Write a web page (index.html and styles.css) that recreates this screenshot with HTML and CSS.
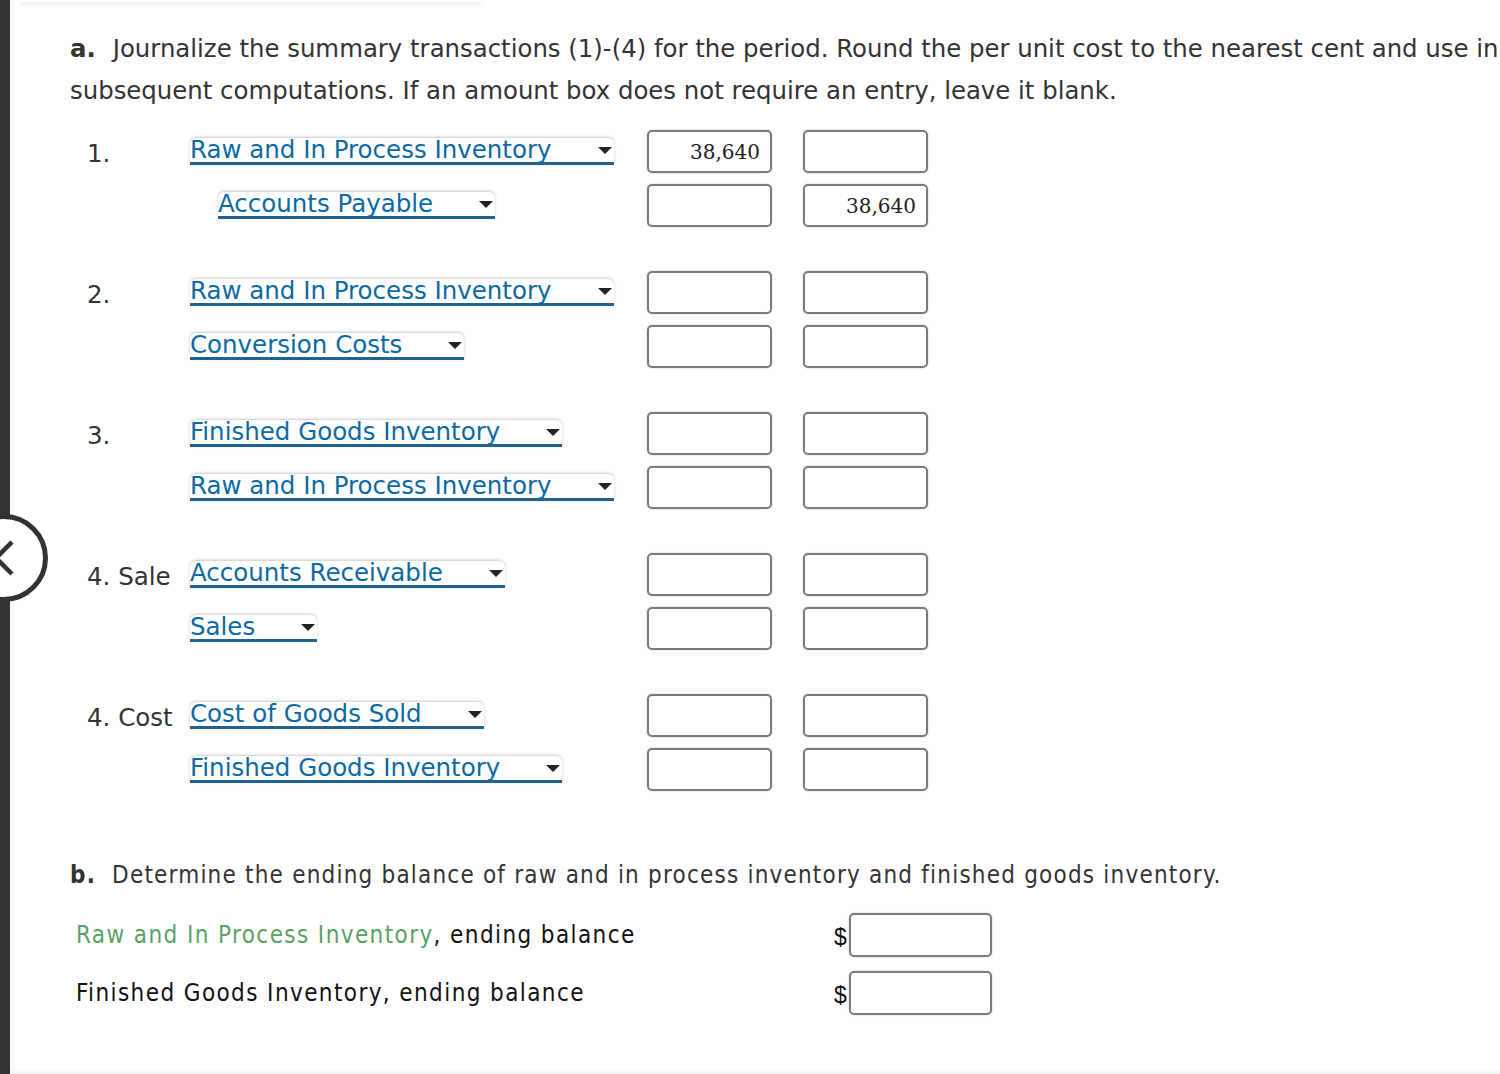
FILE: index.html
```html
<!DOCTYPE html>
<html>
<head>
<meta charset="utf-8">
<link rel="stylesheet" href="styles.css">
</head>
<body>
<div class="page">
  <div class="strip"></div>
  <div class="content">
    <div class="prev-card"></div>
    <p class="instr"><b class="part-label">a.</b>Journalize the summary transactions (1)-(4) for the period. Round the per unit cost to the nearest cent and use in subsequent computations. If an amount box does not require an entry, leave it blank.</p>

    <div class="journal">
      <div class="group">
        <div class="entry">
          <div class="num">1.</div>
          <div class="acct"><span class="select">Raw and In Process Inventory<i class="arrow"></i></span></div>
          <div class="amt">38,640</div>
          <div class="amt"></div>
        </div>
        <div class="entry">
          <div class="num"></div>
          <div class="acct credit"><span class="select">Accounts Payable<i class="arrow"></i></span></div>
          <div class="amt"></div>
          <div class="amt">38,640</div>
        </div>
      </div>
      <div class="group">
        <div class="entry">
          <div class="num">2.</div>
          <div class="acct"><span class="select">Raw and In Process Inventory<i class="arrow"></i></span></div>
          <div class="amt"></div>
          <div class="amt"></div>
        </div>
        <div class="entry">
          <div class="num"></div>
          <div class="acct"><span class="select">Conversion Costs<i class="arrow"></i></span></div>
          <div class="amt"></div>
          <div class="amt"></div>
        </div>
      </div>
      <div class="group">
        <div class="entry">
          <div class="num">3.</div>
          <div class="acct"><span class="select">Finished Goods Inventory<i class="arrow"></i></span></div>
          <div class="amt"></div>
          <div class="amt"></div>
        </div>
        <div class="entry">
          <div class="num"></div>
          <div class="acct"><span class="select">Raw and In Process Inventory<i class="arrow"></i></span></div>
          <div class="amt"></div>
          <div class="amt"></div>
        </div>
      </div>
      <div class="group">
        <div class="entry">
          <div class="num">4. Sale</div>
          <div class="acct"><span class="select">Accounts Receivable<i class="arrow"></i></span></div>
          <div class="amt"></div>
          <div class="amt"></div>
        </div>
        <div class="entry">
          <div class="num"></div>
          <div class="acct"><span class="select">Sales<i class="arrow"></i></span></div>
          <div class="amt"></div>
          <div class="amt"></div>
        </div>
      </div>
      <div class="group">
        <div class="entry">
          <div class="num">4. Cost</div>
          <div class="acct"><span class="select">Cost of Goods Sold<i class="arrow"></i></span></div>
          <div class="amt"></div>
          <div class="amt"></div>
        </div>
        <div class="entry">
          <div class="num"></div>
          <div class="acct"><span class="select">Finished Goods Inventory<i class="arrow"></i></span></div>
          <div class="amt"></div>
          <div class="amt"></div>
        </div>
      </div>
    </div>

    <p class="part-b"><b class="part-label">b.</b>Determine the ending balance of raw and in process inventory and finished goods inventory.</p>
    <div class="balances">
      <div class="bal-row">
        <div class="bal-label"><span class="green">Raw and In Process Inventory</span>, ending balance</div>
        <div class="dollar">$</div>
        <div class="bal-box"></div>
      </div>
      <div class="bal-row">
        <div class="bal-label">Finished Goods Inventory, ending balance</div>
        <div class="dollar">$</div>
        <div class="bal-box"></div>
      </div>
    </div>
  </div>
</div>
<div class="nav-circle"><svg width="20" height="40" viewBox="0 0 20 40"><path d="M14 4 L-2 20 L14 36" fill="none" stroke="#333" stroke-width="4.5"/></svg></div>
<div class="bottom-band"></div>
</body>
</html>
```

FILE: styles.css
```css
html, body {
  margin: 0;
  padding: 0;
  background: #fff;
}
body {
  position: relative;
  width: 1500px;
  height: 1074px;
  overflow: hidden;
  font-family: "DejaVu Sans", Verdana, sans-serif;
  color: #333;
}
.page {
  display: flex;
  height: 1074px;
}
.strip {
  width: 10px;
  flex: none;
  background: #333;
}
.content {
  flex: 1;
  padding-left: 60px;
}
.prev-card {
  width: 460px;
  height: 2px;
  margin-left: -50px;
  background: #fff;
  box-shadow: 0 1px 4px rgba(0, 0, 0, 0.18);
}
.instr {
  margin: 26px 0 0 0;
  font-size: 24.4px;
  line-height: 42px;
  width: 1440px;
}
.part-label {
  display: inline-block;
  font-weight: bold;
  margin-right: 17px;
}
.journal {
  margin-top: 18px;
  margin-left: 17px;
  display: flex;
  flex-direction: column;
  gap: 44px;
}
.group {
  display: flex;
  flex-direction: column;
  gap: 11px;
}
.entry {
  display: flex;
  align-items: center;
  height: 43px;
}
.num {
  width: 103px;
  flex: none;
  font-size: 24.5px;
  color: #333;
  padding-top: 4px;
  white-space: nowrap;
}
.acct {
  width: 457px;
  flex: none;
}
.acct.credit {
  padding-left: 28px;
  width: 429px;
}
.select {
  display: inline-flex;
  align-items: center;
  gap: 46px;
  padding-right: 2px;
  height: 24px;
  font-size: 24.5px;
  line-height: 24px;
  color: #0c69a3;
  background: #fff;
  border-radius: 6px 6px 0 0;
  border-bottom: 3px solid #23618e;
  box-shadow: 0 -1px 3px rgba(0, 0, 0, 0.22);
  white-space: nowrap;
}
.arrow {
  display: inline-block;
  width: 0;
  height: 0;
  border-left: 7px solid transparent;
  border-right: 7px solid transparent;
  border-top: 7px solid #222;
  margin-top: 1px;
}
.amt {
  box-sizing: border-box;
  width: 125px;
  height: 43px;
  flex: none;
  border: 2px solid #7a7a7a;
  border-radius: 5px;
  box-shadow: 0 0 2px rgba(0, 0, 0, 0.25);
  font-family: "DejaVu Serif", "Liberation Serif", serif;
  font-size: 20px;
  color: #222;
  text-align: right;
  padding: 1px 10px 0;
  line-height: 39px;
}
.amt + .amt {
  margin-left: 31px;
}
.part-b {
  margin: 69px 0 0 0;
  font-family: "DejaVu Sans Condensed", "DejaVu Sans", sans-serif;
  font-size: 24px;
  letter-spacing: 1.2px;
  line-height: 30px;
  color: #333;
}
.part-b .part-label {
  margin-right: 16px;
}
.balances {
  margin-top: 23px;
  display: flex;
  flex-direction: column;
  gap: 14px;
}
.bal-row {
  display: flex;
  align-items: center;
  height: 44px;
  padding-left: 6px;
}
.bal-label {
  width: 758px;
  flex: none;
  font-family: "DejaVu Sans Condensed", "DejaVu Sans", sans-serif;
  font-size: 24px;
  letter-spacing: 1.4px;
  color: #111;
  white-space: nowrap;
}
.green {
  color: #5aa263;
}
.dollar {
  width: 15px;
  flex: none;
  font-family: "Liberation Sans", sans-serif;
  font-size: 23px;
  color: #111;
  padding-top: 4px;
}
.bal-box {
  box-sizing: border-box;
  width: 143px;
  height: 44px;
  border: 2px solid #7a7a7a;
  border-radius: 5px;
  box-shadow: 0 0 2px rgba(0, 0, 0, 0.25);
}
.nav-circle {
  position: absolute;
  left: -40px;
  top: 514px;
  width: 78px;
  height: 78px;
  border: 5px solid #333;
  border-radius: 50%;
  background: #fff;
  display: flex;
  align-items: center;
  justify-content: flex-end;
}
.nav-circle svg {
  margin-right: 25px;
}
.bottom-band {
  position: absolute;
  left: 10px;
  right: 0;
  bottom: 0;
  height: 5px;
  background: linear-gradient(#fff, #f2f2f2);
}
```
